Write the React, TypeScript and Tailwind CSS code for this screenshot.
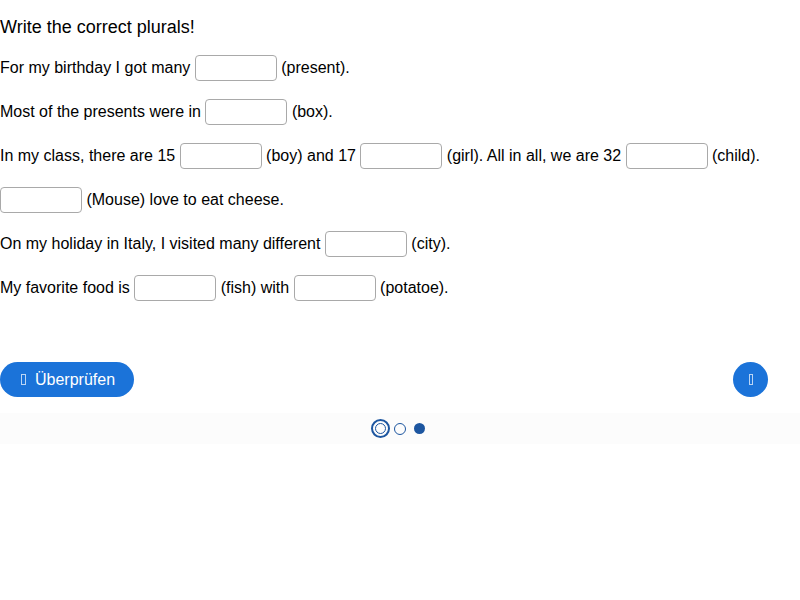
import React, { useState } from "react";

type Part = string | { key: string };

const lines: Part[][] = [
  ["For my birthday I got many ", { key: "present" }, " (present)."],
  ["Most of the presents were in ", { key: "box" }, " (box)."],
  [
    "In my class, there are 15 ",
    { key: "boy" },
    " (boy) and 17 ",
    { key: "girl" },
    " (girl). All in all, we are 32 ",
    { key: "child" },
    " (child).",
  ],
  [{ key: "mouse" }, " (Mouse) love to eat cheese."],
  ["On my holiday in Italy, I visited many different ", { key: "city" }, " (city)."],
  ["My favorite food is ", { key: "fish" }, " (fish) with ", { key: "potato" }, " (potatoe)."],
];

// placeholder box where the icon font glyph would sit
const GlyphBox = () => (
  <span className="inline-block w-[5px] h-[11px] border border-white/70" />
);

const App = () => {
  const [answers, setAnswers] = useState<Record<string, string>>({});

  return (
    <div className="bg-white text-black font-['Liberation_Sans',Arial,sans-serif] w-[800px]">
      <h2 className="pt-[16px] text-[18px] leading-[22px] mb-[17px]">Write the correct plurals!</h2>
      <div className="flex flex-col gap-[18px]">
        {lines.map((line, i) => (
          <p key={i} className="text-[16px] leading-[26px] whitespace-pre">
            {line.map((part, j) =>
              typeof part === "string" ? (
                <span key={j}>{part}</span>
              ) : (
                <input
                  key={j}
                  type="text"
                  value={answers[part.key] || ""}
                  onChange={(e) => setAnswers({ ...answers, [part.key]: e.target.value })}
                  className="inline-block align-top w-[82px] h-[26px] border border-[#a9a9a9] rounded-[4px] bg-white px-1 outline-none"
                />
              )
            )}
          </p>
        ))}
      </div>
      <div className="flex items-center justify-between mt-[61px] pr-[32px]">
        <button className="h-[35px] w-[134px] rounded-full bg-[#1b73d9] text-white text-[16px] flex items-center pl-[21px] gap-[9px]">
          <GlyphBox />
          <span>Überprüfen</span>
        </button>
        <button className="h-[35px] w-[35px] rounded-full bg-[#1b73d9] text-white flex items-center justify-center">
          <span className="inline-block w-[4px] h-[11px] border border-white/70" />
        </button>
      </div>
      <div className="mt-[16px] h-[31px] bg-[#fcfcfc] flex items-center justify-center pr-[4px]">
        <span className="w-[19px] h-[19px] rounded-full border-2 border-[#1d56a0] flex items-center justify-center">
          <span className="w-[11px] h-[11px] rounded-full border border-[#1d56a0]" />
        </span>
        <span className="ml-[4px] w-[12px] h-[12px] rounded-full border border-[#1d56a0]" />
        <span className="ml-[8px] w-[11px] h-[11px] rounded-full bg-[#1d56a0]" />
      </div>
    </div>
  );
};

export default App;
